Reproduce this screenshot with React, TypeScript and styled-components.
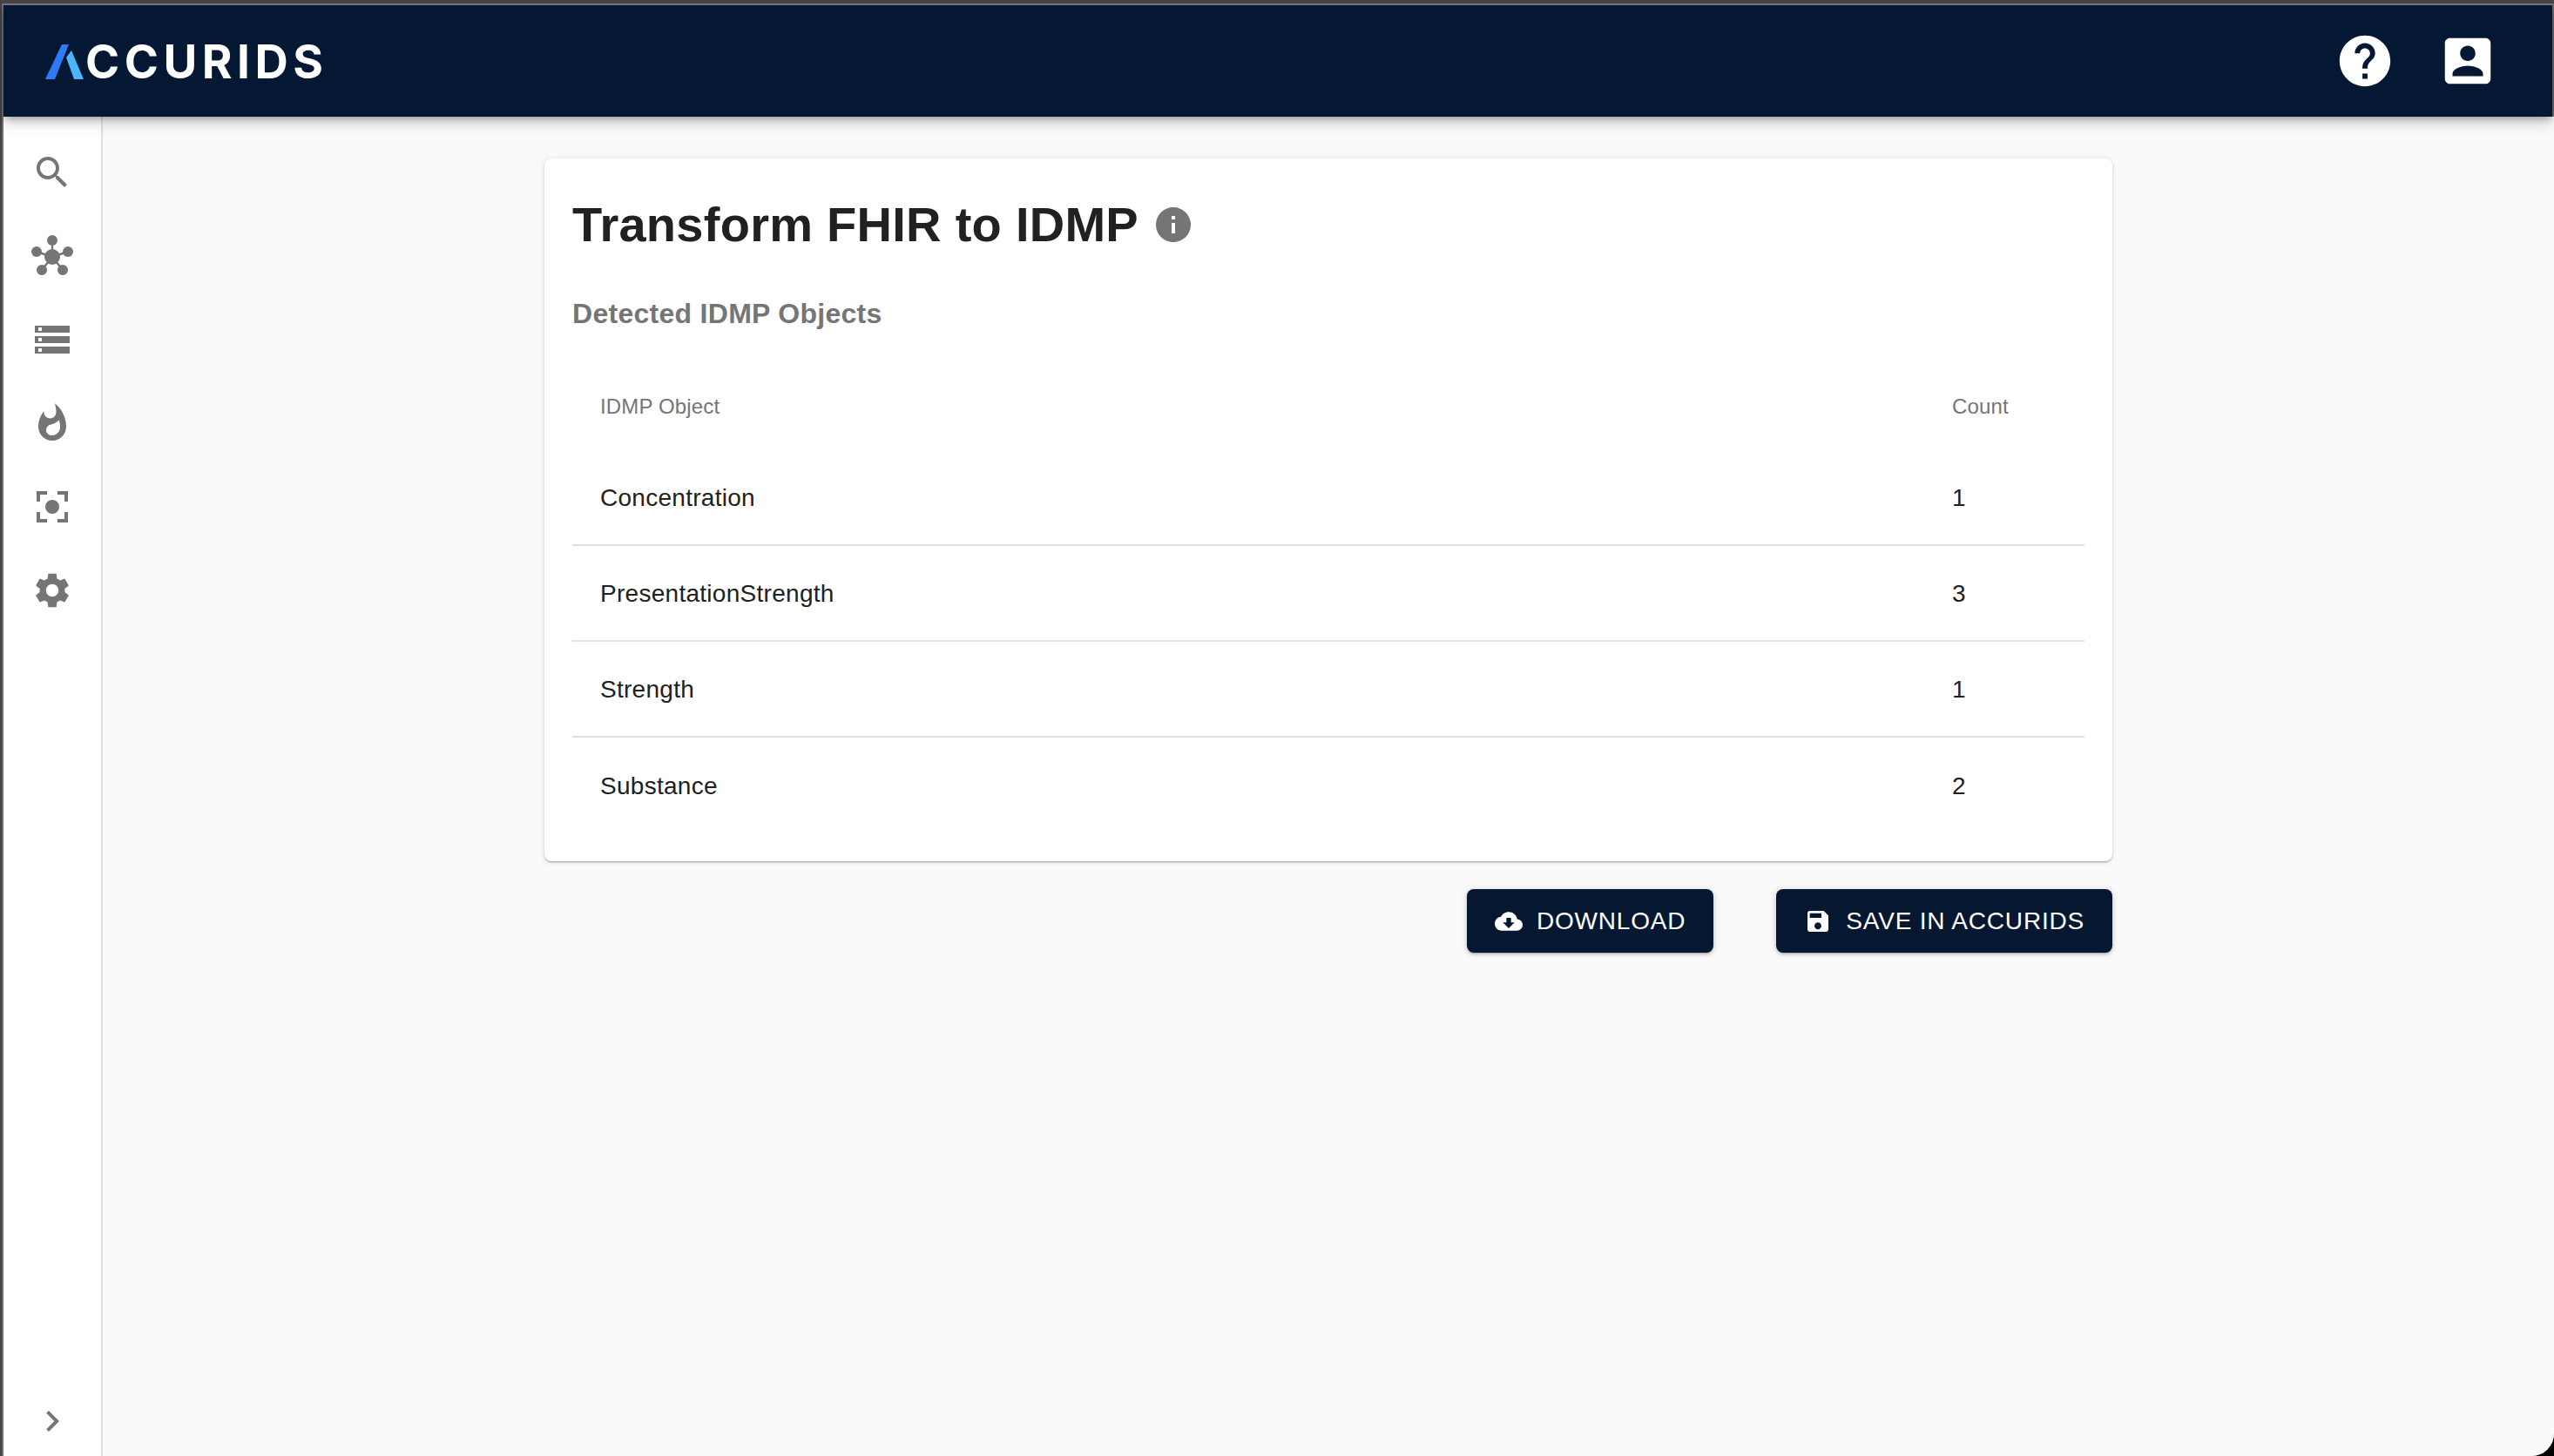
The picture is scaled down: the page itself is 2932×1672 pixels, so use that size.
import React from "react";
import styled, { createGlobalStyle } from "styled-components";

const Global = createGlobalStyle`
  html, body { margin: 0; padding: 0; background: #000; }
  * { box-sizing: border-box; }
  body { font-family: "Liberation Sans", Arial, sans-serif; }
`;

const Frame = styled.div`
  width: 2932px;
  height: 1672px;
  display: flex;
  flex-direction: column;
  overflow: hidden;
  border-top: 4px solid #444444;
  border-radius: 0 0 26px 0;
  background: #fafafa;
  box-shadow: inset 2px 0 0 #444444, inset 4px 0 0 #6f6f6f, inset -2px 0 0 #6f6f6f;
  padding: 0 2px 0 4px;
`;
const TopEdge = styled.div`
  height: 2px;
  background: #7a7a7a;
  flex: none;
`;
const Header = styled.header`
  position: relative;
  z-index: 2;
  flex: none;
  height: 128px;
  background: #041733;
  display: flex;
  align-items: center;
  justify-content: space-between;
  padding: 0 62px 0 48px;
  box-shadow: 0 4px 8px -2px rgba(0,0,0,.3), 0 8px 14px 1px rgba(0,0,0,.14);
`;
const Logo = styled.div`
  display: flex;
  align-items: center;
  gap: 2px;
  margin-top: 2px;
`;
const LogoText = styled.span`
  font-family: "Inter", sans-serif;
  font-weight: 700;
  font-size: 53px;
  line-height: 40px;
  letter-spacing: 5.5px;
  color: #fff;
`;
const HeaderIcons = styled.div`
  display: flex;
  align-items: center;
  gap: 48px;
`;
const Body = styled.div`
  flex: 1;
  display: flex;
  min-height: 0;
`;
const Side = styled.nav`
  flex: none;
  width: 114px;
  background: #fff;
  border-right: 2px solid #e0e0e0;
  padding-top: 16px;
  display: flex;
  flex-direction: column;
  align-items: center;
`;
const SideItem = styled.div`
  height: 96px;
  width: 100%;
  display: flex;
  align-items: center;
  justify-content: center;
`;
const Expand = styled(SideItem)`
  margin-top: auto;
  height: 80px;
`;
const Main = styled.main`
  flex: 1;
  padding-top: 48px;
  margin-right: -2px;
  background: #fafafa;
  display: flex;
  flex-direction: column;
  align-items: center;
`;
const Column = styled.div`
  width: 1800px;
  display: flex;
  flex-direction: column;
`;
const Card = styled.section`
  background: #fff;
  border-radius: 8px;
  padding: 34px 32px 33px;
  box-shadow: 0 2px 2px -1px rgba(0,0,0,.2), 0 1px 2px 0 rgba(0,0,0,.14), 0 1px 6px 0 rgba(0,0,0,.12);
`;
const TitleRow = styled.div`
  display: flex;
  align-items: center;
  gap: 16px;
  height: 84px;
`;
const Title = styled.h1`
  margin: 0;
  font-size: 56px;
  line-height: 84px;
  font-weight: 700;
  letter-spacing: .27px;
  color: #212121;
`;
const Subtitle = styled.h2`
  margin: 36px 0 0;
  font-size: 32px;
  line-height: 48px;
  font-weight: 700;
  letter-spacing: .28px;
  color: #757575;
`;
const Table = styled.table`
  width: 100%;
  margin-top: 32px;
  border-collapse: collapse;
  table-layout: fixed;
`;
const HeadCell = styled.th`
  height: 100px;
  padding: 2px 32px 0;
  text-align: left;
  font-size: 24px;
  font-weight: 400;
  letter-spacing: .15px;
  color: #757575;
`;
const Row = styled.tr`
  & + & td { border-top: 2px solid #e0e0e0; }
`;
const Cell = styled.td`
  height: 110px;
  padding: 2px 32px 0;
  font-size: 28px;
  letter-spacing: .28px;
  color: #212121;
`;
const CountCol = styled.col`
  width: 184px;
`;
const Actions = styled.div`
  display: flex;
  justify-content: flex-end;
  gap: 72px;
  margin-top: 32px;
`;
const Button = styled.button`
  height: 73px;
  padding: 0 32px;
  border: 0;
  border-radius: 8px;
  background: #061831;
  color: #fff;
  display: flex;
  align-items: center;
  gap: 16px;
  font-family: "Liberation Sans", Arial, sans-serif;
  font-size: 28px;
  letter-spacing: .8px;
  box-shadow: 0 3px 2px -2px rgba(0,0,0,.2), 0 2px 4px 0 rgba(0,0,0,.14), 0 1px 10px 0 rgba(0,0,0,.12);
`;
const Icon = styled.svg<{ $color: string }>`
  display: block;
  flex: none;
  fill: ${(p) => p.$color};
`;

const G = ({ d, size, color }: { d: string; size: number; color: string }) => (
  <Icon $color={color} width={size} height={size} viewBox="0 0 24 24"><path d={d} /></Icon>
);

const P = {
  help: "M12 2C6.48 2 2 6.48 2 12s4.48 10 10 10 10-4.48 10-10S17.52 2 12 2zm1 17h-2v-2h2v2zm2.07-7.75l-.9.92C13.45 12.9 13 13.5 13 15h-2v-.5c0-1.1.45-2.1 1.17-2.83l1.24-1.26c.37-.36.59-.86.59-1.41 0-1.1-.9-2-2-2s-2 .9-2 2H8c0-2.21 1.79-4 4-4s4 1.79 4 4c0 .88-.36 1.68-.93 2.25z",
  account: "M3 5v14c0 1.1.89 2 2 2h14c1.1 0 2-.9 2-2V5c0-1.1-.9-2-2-2H5c-1.11 0-2 .9-2 2zm12 4c0 1.66-1.34 3-3 3s-3-1.34-3-3 1.34-3 3-3 3 1.34 3 3zm-9 8c0-2 4-3.1 6-3.1s6 1.1 6 3.1v1H6v-1z",
  search: "M15.5 14h-.79l-.28-.27C15.41 12.59 16 11.11 16 9.5 16 5.91 13.09 3 9.5 3S3 5.91 3 9.5 5.91 16 9.5 16c1.61 0 3.09-.59 4.23-1.57l.27.28v.79l5 4.99L20.49 19l-4.99-5zm-6 0C7.01 14 5 11.99 5 9.5S7.01 5 9.5 5 14 7.01 14 9.5 11.99 14 9.5 14z",
  storage: "M2 20h20v-4H2v4zm2-3h2v2H4v-2zM2 4v4h20V4H2zm4 3H4V5h2v2zm-4 7h20v-4H2v4zm2-3h2v2H4v-2z",
  fire: "M13.5.67s.74 2.65.74 4.8c0 2.06-1.35 3.73-3.41 3.73-2.07 0-3.63-1.67-3.63-3.73l.03-.36C5.21 7.51 4 10.62 4 14c0 4.42 3.58 8 8 8s8-3.58 8-8C20 8.61 17.41 3.8 13.5.67zM11.71 19c-1.78 0-3.22-1.4-3.22-3.14 0-1.62 1.05-2.76 2.81-3.12 1.77-.36 3.6-1.21 4.62-2.58.39 1.29.59 2.65.59 4.04 0 2.65-2.15 4.8-4.8 4.8z",
  focus: "M12 8a4 4 0 1 0 0 8 4 4 0 0 0 0-8zM5 15H3v6h6v-2H5zM3 9h2V5h4V3H3zM15 3v2h4v4h2V3zM19 19h-4v2h6v-6h-2z",
  settings: "M19.14 12.94c.04-.3.06-.61.06-.94 0-.32-.02-.64-.07-.94l2.03-1.58c.18-.14.23-.41.12-.61l-1.92-3.32c-.12-.22-.37-.29-.59-.22l-2.39.96c-.5-.38-1.03-.7-1.62-.94l-.36-2.54c-.04-.24-.24-.41-.48-.41h-3.84c-.24 0-.43.17-.47.41l-.36 2.54c-.59.24-1.13.57-1.62.94l-2.39-.96c-.22-.08-.47 0-.59.22L2.74 8.87c-.12.21-.08.47.12.61l2.03 1.58c-.05.3-.09.63-.09.94s.02.64.07.94l-2.03 1.58c-.18.14-.23.41-.12.61l1.92 3.32c.12.22.37.29.59.22l2.39-.96c.5.38 1.03.7 1.62.94l.36 2.54c.05.24.24.41.48.41h3.84c.24 0 .44-.17.47-.41l.36-2.54c.59-.24 1.13-.56 1.62-.94l2.39.96c.22.08.47 0 .59-.22l1.92-3.32c.12-.22.07-.47-.12-.61l-2.01-1.58zM12 15.6c-1.98 0-3.6-1.62-3.6-3.6s1.62-3.6 3.6-3.6 3.6 1.62 3.6 3.6-1.62 3.6-3.6 3.6z",
  chevron: "M10 6L8.59 7.41 13.17 12l-4.58 4.59L10 18l6-6z",
  info: "M12 2C6.48 2 2 6.48 2 12s4.48 10 10 10 10-4.48 10-10S17.52 2 12 2zm1 15h-2v-6h2v6zm0-8h-2V7h2v2z",
  cloud: "M19.35 10.04C18.67 6.59 15.64 4 12 4 9.11 4 6.6 5.64 5.35 8.04 2.34 8.36 0 10.91 0 14c0 3.31 2.69 6 6 6h13c2.76 0 5-2.24 5-5 0-2.64-2.05-4.78-4.65-4.96zM17 13l-5 5-5-5h3V9h4v4h3z",
  save: "M17 3H5c-1.11 0-2 .9-2 2v14c0 1.1.89 2 2 2h14c1.1 0 2-.9 2-2V7l-4-4zm-5 16c-1.66 0-3-1.34-3-3s1.34-3 3-3 3 1.34 3 3-1.34 3-3 3zm3-10H5V5h10v4z",
};

const GREY = "#757575";

const Hub = () => (
  <svg width="48" height="48" viewBox="0 0 48 48" fill={GREY} stroke={GREY} strokeWidth="2.4">
    <path d="M24 25V6M24 25L6 19M24 25L42 19M24 25L12 40M24 25L36 40" fill="none" />
    <g stroke="none">
      <circle cx="24" cy="25" r="9" />
      <circle cx="24" cy="6" r="6" />
      <circle cx="6" cy="19" r="6" />
      <circle cx="42" cy="19" r="6" />
      <circle cx="12" cy="40" r="6" />
      <circle cx="36" cy="40" r="6" />
    </g>
  </svg>
);

const Mark = () => (
  <svg width="44" height="40" viewBox="0 0 44 40">
    <polygon points="0,40 19,0 27,0 11,40" fill="#2f7bf6" />
    <polygon points="24,15 30,7 44,40 33,40" fill="#4db4ff" />
  </svg>
);

const rows: [string, number][] = [
  ["Concentration", 1],
  ["PresentationStrength", 3],
  ["Strength", 1],
  ["Substance", 2],
];

export default function App() {
  return (
    <Frame>
      <Global />
      <TopEdge />
      <Header>
        <Logo>
          <Mark />
          <LogoText>CCURIDS</LogoText>
        </Logo>
        <HeaderIcons>
          <G d={P.help} size={70} color="#fff" />
          <G d={P.account} size={70} color="#fff" />
        </HeaderIcons>
      </Header>
      <Body>
        <Side>
          <SideItem><G d={P.search} size={48} color={GREY} /></SideItem>
          <SideItem><Hub /></SideItem>
          <SideItem><G d={P.storage} size={48} color={GREY} /></SideItem>
          <SideItem><G d={P.fire} size={48} color={GREY} /></SideItem>
          <SideItem><G d={P.focus} size={48} color={GREY} /></SideItem>
          <SideItem><G d={P.settings} size={48} color={GREY} /></SideItem>
          <Expand><G d={P.chevron} size={48} color={GREY} /></Expand>
        </Side>
        <Main>
          <Column>
            <Card>
              <TitleRow>
                <Title>Transform FHIR to IDMP</Title>
                <G d={P.info} size={48} color={GREY} />
              </TitleRow>
              <Subtitle>Detected IDMP Objects</Subtitle>
              <Table>
                <colgroup>
                  <col />
                  <CountCol />
                </colgroup>
                <thead>
                  <tr>
                    <HeadCell>IDMP Object</HeadCell>
                    <HeadCell>Count</HeadCell>
                  </tr>
                </thead>
                <tbody>
                  {rows.map(([name, count]) => (
                    <Row key={name}>
                      <Cell>{name}</Cell>
                      <Cell>{count}</Cell>
                    </Row>
                  ))}
                </tbody>
              </Table>
            </Card>
            <Actions>
              <Button><G d={P.cloud} size={32} color="#fff" />DOWNLOAD</Button>
              <Button><G d={P.save} size={32} color="#fff" />SAVE IN ACCURIDS</Button>
            </Actions>
          </Column>
        </Main>
      </Body>
    </Frame>
  );
}
